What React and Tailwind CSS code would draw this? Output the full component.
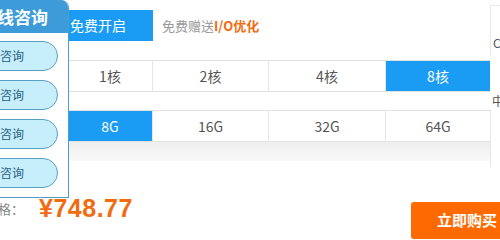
import React, { useState } from 'react';

const cpuOptions = ['1核', '2核', '4核', '8核'];
const memOptions = ['8G', '16G', '32G', '64G'];
const colWidths = ['w-[84px]', 'w-[116px]', 'w-[117px]', 'w-[105px]'];

const OptionRow = ({ options, selected, onSelect }) => (
  <div className="flex h-[32px] border-y border-[#e2e2e2]">
    {options.map((opt, i) => (
      <button
        key={opt}
        onClick={() => onSelect(opt)}
        className={`${colWidths[i]} flex items-center justify-center text-[14px] ${
          i > 0 ? 'border-l border-[#e6e6e6]' : ''
        } ${selected === opt ? 'bg-[#1a9cf5] text-white' : 'text-[#555]'}`}
      >
        {opt}
      </button>
    ))}
  </div>
);

const App = () => {
  const [cpu, setCpu] = useState('8核');
  const [mem, setMem] = useState('8G');

  return (
    <div
      className="relative w-[500px] h-[240px] overflow-hidden bg-white"
      style={{ fontFamily: '"Microsoft YaHei", "Noto Sans CJK SC", sans-serif' }}
    >
      <div className="flex">
        <div className="w-[68px] shrink-0" />
        <div className="w-[422px] shrink-0">
          {/* top line */}
          <div className="flex items-center h-[31px] mt-[10px]">
            <div className="w-[85px] h-full bg-[#1a9cf5] text-white text-[14px] flex items-center pl-[2px]">
              免费开启
            </div>
            <div className="ml-[9px] text-[13px] text-[#999]">
              免费赠送<span className="text-[#f26b10] font-bold">I/O优化</span>
            </div>
          </div>

          <div className="mt-[19px]">
            <OptionRow options={cpuOptions} selected={cpu} onSelect={setCpu} />
          </div>
          <div className="mt-[18px]">
            <OptionRow options={memOptions} selected={mem} onSelect={setMem} />
          </div>
          <div className="h-[19px] bg-gradient-to-b from-[#eeeeee] to-[#f9f9f9]" />
        </div>

        {/* cut-off right column */}
        <div className="flex-1 flex flex-col text-[12px] text-[#555]">
          <div className="mt-[5px] h-[51px] border-l border-t border-[#e8e8e8] pl-[2px] flex items-end pb-[4px]">
            C
          </div>
          <div className="mt-[39px] pl-[2px] leading-none">中</div>
          <div className="mt-[2px] h-[58px] border-l border-[#e8e8e8]" />
        </div>
      </div>

      {/* price */}
      <div className="absolute left-0 top-[190px] flex items-center">
        <span className="text-[13px] text-[#888] -ml-[2px]">格：</span>
        <span
          className="ml-[15px] text-[25px] font-bold text-[#f26b10] tracking-[0.5px]"
          style={{ fontFamily: '"Liberation Sans", Arial, sans-serif' }}
        >
          ¥748.77
        </span>
      </div>

      {/* buy button */}
      <button className="absolute left-[411px] top-[202px] w-[100px] h-[37px] rounded-[3px] bg-[#ff6a00] text-white text-[15px] font-bold pl-[26px] text-left">
        立即购买
      </button>

      {/* floating consult panel */}
      <div className="absolute left-0 top-0 w-[69px] h-[198px] bg-white border-r border-b border-[#4f9cc9] rounded-tr-[8px] overflow-hidden">
        <div className="h-[33px] bg-[#3c9bd8] text-white text-[17px] font-bold flex items-center -ml-[3px]">
          线咨询
        </div>
        <div className="flex flex-col gap-[9px] mt-[8px]">
          {[0, 1, 2, 3].map((i) => (
            <div
              key={i}
              className="w-[59px] h-[30px] -ml-[1px] bg-[#c6effb] border border-[#5a9fc4] rounded-r-full flex items-center text-[12px] text-[#2a5f86]"
            >
              咨询
            </div>
          ))}
        </div>
      </div>
    </div>
  );
};

export default App;
